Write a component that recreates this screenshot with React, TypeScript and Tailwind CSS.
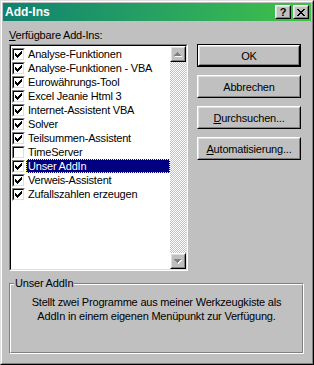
import React from 'react';

const addIns = [
  { label: 'Analyse-Funktionen', checked: true },
  { label: 'Analyse-Funktionen - VBA', checked: true },
  { label: 'Eurowährungs-Tool', checked: true },
  { label: 'Excel Jeanie Html 3', checked: true },
  { label: 'Internet-Assistent VBA', checked: true },
  { label: 'Solver', checked: true },
  { label: 'Teilsummen-Assistent', checked: true },
  { label: 'TimeServer', checked: false },
  { label: 'Unser AddIn', checked: true, selected: true },
  { label: 'Verweis-Assistent', checked: true },
  { label: 'Zufallszahlen erzeugen', checked: true },
];

const font = "font-['Liberation_Sans',Arial,sans-serif]";

function Raised({ children, className = '' }: { children?: React.ReactNode; className?: string }) {
  return (
    <div className={`border border-t-white border-l-white border-r-black border-b-black ${className}`}>
      <div className="w-full h-full border border-t-[#dfdfdf] border-l-[#dfdfdf] border-r-[#808080] border-b-[#808080] bg-[#c0c0c0] flex items-center justify-center">
        {children}
      </div>
    </div>
  );
}

function Button({ children, isDefault = false }: { children: React.ReactNode; isDefault?: boolean }) {
  return (
    <div className={`w-[104px] h-[23px] ${isDefault ? 'border border-black' : ''}`}>
      <Raised className="w-full h-full">
        <span className="text-[11px] leading-[14px] tracking-[-0.2px] text-black">{children}</span>
      </Raised>
    </div>
  );
}

function Check() {
  return (
    <svg width="7" height="7" viewBox="0 0 7 7" shapeRendering="crispEdges">
      <path
        fill="#000"
        d="M6 0h1v1H6z M5 1h2v1H5z M0 2h1v1H0z M4 2h3v1H4z M0 3h2v1H0z M3 3h3v1H3z M0 4h5v1H0z M1 5h3v1H1z M2 6h1v1H2z"
      />
    </svg>
  );
}

function Checkbox({ checked }: { checked: boolean }) {
  return (
    <div className="w-[13px] h-[13px] shrink-0 border border-t-[#808080] border-l-[#808080] border-r-white border-b-white">
      <div className="w-full h-full border border-t-black border-l-black border-r-[#dfdfdf] border-b-[#dfdfdf] bg-white flex items-center justify-center">
        {checked && <Check />}
      </div>
    </div>
  );
}

function Arrow({ up }: { up: boolean }) {
  return (
    <Raised className="w-[16px] h-[16px] shrink-0">
      <svg width="8" height="5" viewBox="0 0 8 5" shapeRendering="crispEdges">
        {up ? (
          <>
            <path fill="#fff" d="M4 1h1v1H4z M3 2h3v1H3z M2 3h5v1H2z M1 4h7v1H1z" />
            <path fill="#808080" d="M3 0h1v1H3z M2 1h3v1H2z M1 2h5v1H1z M0 3h7v1H0z" />
          </>
        ) : (
          <>
            <path fill="#fff" d="M1 1h7v1H1z M2 2h5v1H2z M3 3h3v1H3z M4 4h1v1H4z" />
            <path fill="#808080" d="M0 0h7v1H0z M1 1h5v1H1z M2 2h3v1H2z M3 3h1v1H3z" />
          </>
        )}
      </svg>
    </Raised>
  );
}

export default function App() {
  return (
    <div className={`w-[314px] h-[365px] ${font} text-black border border-t-[#dfdfdf] border-l-[#dfdfdf] border-r-black border-b-black`}>
      <div className="w-full h-full border border-t-white border-l-white border-r-[#808080] border-b-[#808080] bg-[#c0c0c0] p-[1px] flex flex-col">
        {/* Title bar */}
        <div className="h-[18px] shrink-0 flex items-center justify-between bg-linear-to-r from-[#0f8270] to-[#40c244] pl-[2px] pr-[2px]">
          <span className="text-[12px] font-bold text-white tracking-[0px] leading-[14px]">Add-Ins</span>
          <div className="flex items-center">
            <Raised className="w-[16px] h-[14px]">
              <span className="text-[11px] font-bold leading-[10px]">?</span>
            </Raised>
            <Raised className="w-[16px] h-[14px] ml-[2px]">
              <svg width="8" height="7" viewBox="0 0 8 7" shapeRendering="crispEdges">
                <path
                  fill="#000"
                  d="M0 0h2v1H0z M6 0h2v1H6z M1 1h2v1H1z M5 1h2v1H5z M2 2h4v1H2z M3 3h2v1H3z M2 4h4v1H2z M1 5h2v1H1z M5 5h2v1H5z M0 6h2v1H0z M6 6h2v1H6z"
                />
              </svg>
            </Raised>
          </div>
        </div>

        {/* Body */}
        <div className="pl-[6px] flex flex-col">
          <div className="mt-[7px] text-[11px] leading-[14px] tracking-[-0.2px]">
            <span className="underline">V</span>erfügbare Add-Ins:
          </div>

          <div className="mt-[2px] flex">
            {/* List box */}
            <div className="w-[179px] h-[227px] border border-t-[#808080] border-l-[#808080] border-r-white border-b-white">
              <div className="w-full h-full border border-t-black border-l-black border-r-[#dfdfdf] border-b-[#dfdfdf] bg-white flex">
                <div className="flex-1 pt-[1px] flex flex-col">
                  {addIns.map((item) => (
                    <div key={item.label} className="h-[14px] flex items-center">
                      <div className="ml-[1px]">
                        <Checkbox checked={item.checked} />
                      </div>
                      <div
                        className={`ml-[1px] flex-1 h-[14px] pl-[1px] text-[11px] leading-[12px] tracking-[-0.2px] flex items-center ${
                          item.selected
                            ? 'bg-[#000080] text-white border border-dotted border-[#ffff80]'
                            : 'border border-transparent'
                        }`}
                      >
                        {item.label}
                      </div>
                    </div>
                  ))}
                </div>
                {/* Scrollbar */}
                <div className="w-[16px] flex flex-col">
                  <Arrow up />
                  <div className="flex-1 bg-[image:repeating-conic-gradient(#c0c0c0_0%_25%,#ffffff_0%_50%)] bg-[length:2px_2px]" />
                  <Arrow up={false} />
                </div>
              </div>
            </div>

            {/* Buttons */}
            <div className="ml-[9px] flex flex-col gap-[8px]">
              <Button isDefault>OK</Button>
              <Button>Abbrechen</Button>
              <Button>
                <span className="underline">D</span>urchsuchen...
              </Button>
              <Button>
                <span className="underline">A</span>utomatisierung...
              </Button>
            </div>
          </div>

          {/* Group box */}
          <div className="relative mt-[12px] w-[295px] h-[71px] border border-t-[#808080] border-l-[#808080] border-r-white border-b-white">
            <div className="w-full h-full border border-t-white border-l-white border-r-[#808080] border-b-[#808080] pt-[10px] text-center text-[11px] leading-[14px] tracking-[-0.2px]">
              Stellt zwei Programme aus meiner Werkzeugkiste als
              <br />
              AddIn in einem eigenen Menüpunkt zur Verfügung.
            </div>
            <span className="absolute top-[-8px] left-[4px] px-[1px] bg-[#c0c0c0] text-[11px] leading-[14px] tracking-[-0.2px]">
              Unser AddIn
            </span>
          </div>
        </div>
      </div>
    </div>
  );
}
